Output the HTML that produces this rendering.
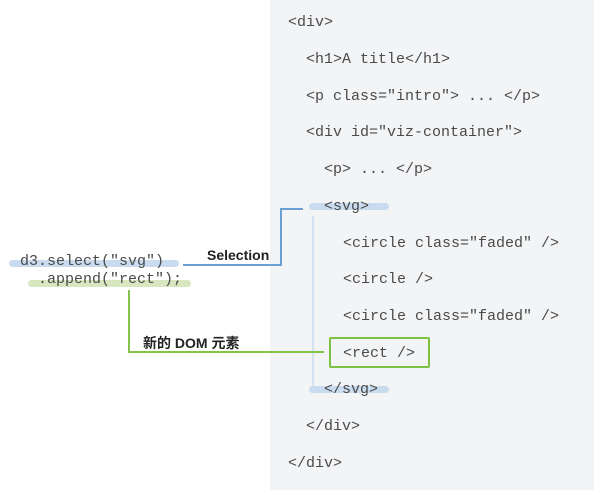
<!DOCTYPE html><html><head><meta charset="utf-8"><style>
body{margin:0;width:594px;height:490px;background:#fff;position:relative;overflow:hidden;font-family:"Liberation Mono",monospace;}
.panel{position:absolute;left:270px;top:0;width:324px;height:490px;background:#f3f4f6;}
.t{position:absolute;font-size:15px;color:#4a4a4a;white-space:pre;line-height:16px;}
.hl{position:absolute;height:7px;border-radius:4px;}
.ln{position:absolute;}
.lbl{position:absolute;font-family:"Liberation Sans","Noto Sans CJK SC",sans-serif;font-weight:bold;font-size:14px;color:#222;white-space:pre;}
</style></head><body>
<div class="panel"></div>
<div class="hl" style="left:309px;top:203px;width:80px;background:#c9dbee"></div>
<div class="hl" style="left:309px;top:386px;width:80px;background:#c9dbee"></div>
<div class="ln" style="left:312px;top:216px;width:2px;height:170px;background:#d3e1f0"></div>
<div class="t" style="left:288px;top:15px">&lt;div&gt;</div>
<div class="t" style="left:306px;top:52px">&lt;h1&gt;A title&lt;/h1&gt;</div>
<div class="t" style="left:306px;top:89px">&lt;p class="intro"&gt; ... &lt;/p&gt;</div>
<div class="t" style="left:306px;top:125px">&lt;div id="viz-container"&gt;</div>
<div class="t" style="left:324px;top:162px">&lt;p&gt; ... &lt;/p&gt;</div>
<div class="t" style="left:324px;top:199px">&lt;svg&gt;</div>
<div class="t" style="left:343px;top:236px">&lt;circle class="faded" /&gt;</div>
<div class="t" style="left:343px;top:272px">&lt;circle /&gt;</div>
<div class="t" style="left:343px;top:309px">&lt;circle class="faded" /&gt;</div>
<div class="t" style="left:343px;top:346px">&lt;rect /&gt;</div>
<div class="t" style="left:324px;top:382px">&lt;/svg&gt;</div>
<div class="t" style="left:306px;top:419px">&lt;/div&gt;</div>
<div class="t" style="left:288px;top:456px">&lt;/div&gt;</div>
<div style="position:absolute;left:329px;top:337px;width:97px;height:27px;border:2px solid #7dc242;border-radius:2px"></div>
<div class="hl" style="left:9px;top:260px;width:170px;background:#c9dbee"></div>
<div class="hl" style="left:28px;top:280px;width:163px;background:#d7e8c0"></div>
<div class="t" style="left:20px;top:254px">d3.select("svg")</div>
<div class="t" style="left:38px;top:272px">.append("rect");</div>
<svg style="position:absolute;left:0;top:0" width="594" height="490">
<polyline points="183,265 281,265 281,209 303,209" fill="none" stroke="#6a9fd4" stroke-width="2"/>
<polyline points="129,290 129,352 324,352" fill="none" stroke="#86c34a" stroke-width="2"/>
</svg>
<div class="lbl" style="left:207px;top:247px">Selection</div>
<div class="lbl" style="left:143px;top:333px">新的 DOM 元素</div>
</body></html>
